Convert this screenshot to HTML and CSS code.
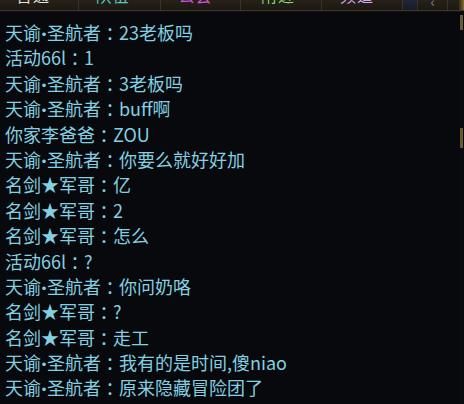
FILE: index.html
```html
<!DOCTYPE html>
<html lang="zh">
<head>
<meta charset="utf-8">
<link rel="stylesheet" href="styles.css">
</head>
<body>
<div class="panel">
  <div class="tabs">
    <div class="tab w79"><span class="label white">普通</span></div>
    <div class="tab w82"><span class="label teal">队伍</span></div>
    <div class="tab w80"><span class="label magenta">公会</span></div>
    <div class="tab w81"><span class="label green">附近</span></div>
    <div class="tab w81"><span class="label lavender">频道</span></div>
    <div class="tab seg-blue"></div>
    <div class="tab seg-arrow"><span class="arrow">‹</span></div>
    <div class="tab seg-end"></div>
    <div class="seg-gold"></div>
  </div>
  <div class="chat">
    <div class="messages">
      <div class="line">天谕<span class="dot">•</span>圣航者<span class="colon">：</span>23老板吗</div>
      <div class="line">活动66l<span class="colon">：</span>1</div>
      <div class="line">天谕<span class="dot">•</span>圣航者<span class="colon">：</span>3老板吗</div>
      <div class="line">天谕<span class="dot">•</span>圣航者<span class="colon">：</span>buff啊</div>
      <div class="line">你家李爸爸<span class="colon">：</span>ZOU</div>
      <div class="line">天谕<span class="dot">•</span>圣航者<span class="colon">：</span>你要么就好好加</div>
      <div class="line">名剑★军哥<span class="colon">：</span>亿</div>
      <div class="line">名剑★军哥<span class="colon">：</span>2</div>
      <div class="line">名剑★军哥<span class="colon">：</span>怎么</div>
      <div class="line">活动66l<span class="colon">：</span>?</div>
      <div class="line">天谕<span class="dot">•</span>圣航者<span class="colon">：</span>你问奶咯</div>
      <div class="line">名剑★军哥<span class="colon">：</span>?</div>
      <div class="line">名剑★军哥<span class="colon">：</span>走工</div>
      <div class="line">天谕<span class="dot">•</span>圣航者<span class="colon">：</span>我有的是时间,傻niao</div>
      <div class="line">天谕<span class="dot">•</span>圣航者<span class="colon">：</span>原来隐藏冒险团了</div>
    </div>
    <div class="scrollbar">
      <div class="gap1"></div>
      <div class="thumb t1"></div>
      <div class="gap2"></div>
      <div class="thumb t2"></div>
    </div>
  </div>
</div>
</body>
</html>
```

FILE: styles.css
```css
html, body {
  margin: 0;
  padding: 0;
  background: #08090c;
}
body {
  width: 464px;
  height: 404px;
  overflow: hidden;
  font-family: "Noto Sans CJK SC", "Noto Sans", sans-serif;
}
.panel {
  display: flex;
  flex-direction: column;
  width: 464px;
  height: 404px;
}
.tabs {
  display: flex;
  height: 10px;
  background: #1c1915;
  border-bottom: 1px solid #40362a;
  box-shadow: 0 1px 0 #14110e;
  overflow: hidden;
  flex: none;
}
.tab {
  height: 10px;
  display: flex;
  justify-content: center;
  align-items: flex-start;
  overflow: hidden;
  border-right: 1px solid #3a332a;
  box-sizing: border-box;
  background: linear-gradient(#262219, #1b1814);
}
.w79 { width: 79px; padding-right: 12px; }
.w82 { width: 82px; padding-right: 14px; }
.w80 { width: 80px; padding-right: 10px; }
.w81 { width: 81px; padding-right: 6px; }
.tab:nth-child(5) { padding-right: 10px; }
.label {
  font-size: 16px;
  line-height: 16px;
  margin-top: -13px;
  letter-spacing: 1px;
}
.white { color: #e6e2dc; }
.teal { color: #56c8b8; }
.magenta { color: #d24fd6; }
.green { color: #8ad46a; }
.lavender { color: #d8a8e8; }
.seg-blue {
  width: 15px;
  background: linear-gradient(#1e2638, #161b26);
}
.seg-arrow {
  width: 30px;
}
.arrow {
  color: #8a8a8a;
  font-size: 14px;
  line-height: 14px;
  margin-top: -6px;
}
.seg-end {
  width: 12px;
}
.seg-gold {
  flex: 1;
  background: linear-gradient(90deg, #3a3020, #8a7028);
}
.chat {
  flex: 1;
  display: flex;
  min-height: 0;
}
.messages {
  flex: 1;
  padding: 9px 0 0 5px;
  color: #82d0e2;
  font-size: 18px;
  line-height: 25.4px;
  white-space: nowrap;
  overflow: hidden;
}
.line {
  height: 25.4px;
}
.dot {
  display: inline-block;
  width: 6px;
  text-align: center;
  font-family: "Liberation Sans", sans-serif;
  font-size: 13px;
  line-height: 10px;
  vertical-align: 1px;
}
.colon {
  display: inline-block;
  width: 18px;
  text-align: center;
  font-feature-settings: "halt" 1;
  line-height: 10px;
}
.scrollbar {
  width: 3px;
  display: flex;
  flex-direction: column;
  background: #0b0c0f;
  margin-right: 1px;
}
.gap1 { height: 4px; }
.gap2 { height: 98px; }
.thumb {
  background: #6a5a30;
}
.t1 { height: 15px; }
.t2 { height: 20px; }
```
